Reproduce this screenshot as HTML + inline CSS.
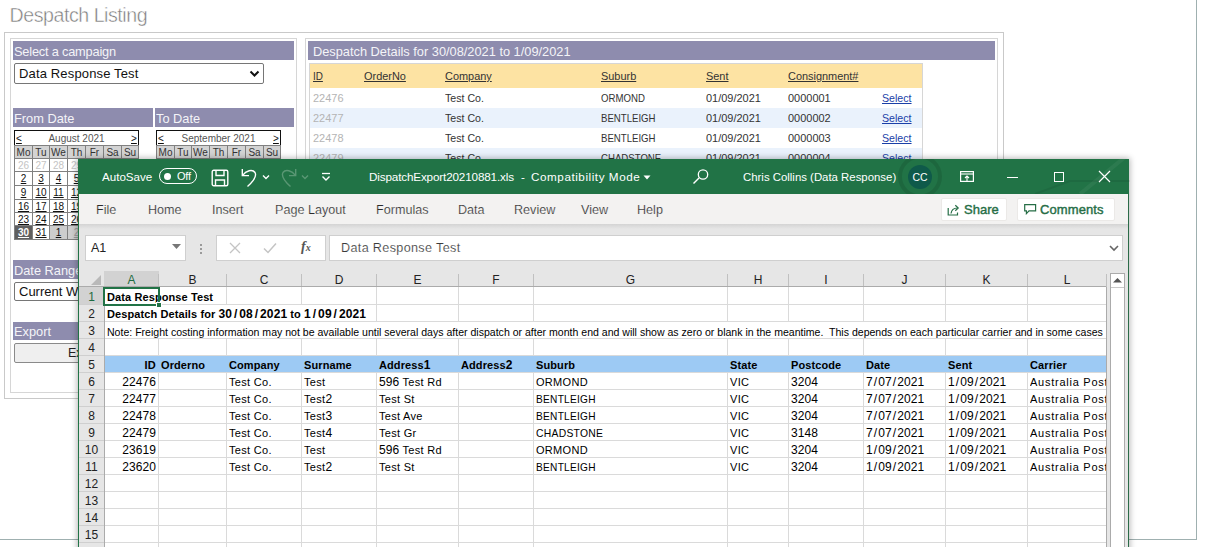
<!DOCTYPE html>
<html><head><meta charset="utf-8">
<style>
*{margin:0;padding:0;box-sizing:border-box}
html,body{width:1206px;height:547px;overflow:hidden;background:#fff;font-family:"Liberation Sans",sans-serif}
.a{position:absolute}
#root{position:relative;width:1206px;height:547px;overflow:hidden;background:#fff}
.ph{position:absolute;background:#8e8cae;color:#f4f4f8;font-size:12.8px;line-height:19px;padding-left:1px;padding-top:1px;white-space:nowrap;overflow:hidden}
.sel{position:absolute;border:1px solid #767676;border-radius:2px;background:#fff;font-size:13px;color:#111;padding-left:4px;white-space:nowrap;overflow:hidden}
.cal{position:absolute;border-collapse:collapse;font-size:10.5px}
.calbox{position:absolute;background:#fff}
.t{position:absolute;white-space:nowrap}
</style></head><body><div id="root">

<!-- page title -->
<div class="t" style="left:9.5px;top:3.5px;font-size:19.6px;color:#7c7c7c;letter-spacing:-0.45px;-webkit-text-stroke:0.45px #fff">Despatch Listing</div>
<!-- outer page frame lines -->
<div class="a" style="left:1196px;top:0;width:1px;height:540px;background:#9fb0b0"></div>
<div class="a" style="left:0;top:539px;width:1197px;height:1px;background:#9fb0b0"></div>

<!-- outer panel -->
<div class="a" style="left:4px;top:32px;width:1000px;height:367px;border:1px solid #c9c9c9"></div>
<!-- left box -->
<div class="a" style="left:10px;top:38px;width:287px;height:355px;border:1px solid #d6d6d6"></div>
<!-- right box -->
<div class="a" style="left:305px;top:38px;width:693px;height:355px;border:1px solid #d6d6d6"></div>

<div class="ph" style="left:13px;top:41px;width:281px;height:19px;letter-spacing:-0.2px">Select a campaign</div>
<div class="sel" style="left:14px;top:63px;width:250px;height:21px;line-height:19px;letter-spacing:0.15px">Data Response Test
  <svg class="a" style="left:234px;top:6px" width="11" height="8" viewBox="0 0 11 8"><path d="M1.5 1.5 L5.5 5.5 L9.5 1.5" fill="none" stroke="#111" stroke-width="2"/></svg>
</div>

<div class="ph" style="left:13px;top:108px;width:140px;height:19px">From Date</div>
<div class="ph" style="left:155px;top:108px;width:139px;height:19px">To Date</div>

<div class="a" style="left:14px;top:130px;width:125px;height:16px;border:1px solid #111;background:#fff"></div>
<div class="t" style="left:16px;top:133px;font-size:10px;line-height:12px;color:#111;text-decoration:underline">&lt;</div>
<div class="t" style="left:131px;top:133px;font-size:10px;line-height:12px;color:#111;text-decoration:underline">&gt;</div>
<div class="t" style="left:14px;width:125px;text-align:center;top:133px;font-size:10px;line-height:12px;color:#555">August 2021</div>
<div class="a" style="left:14px;top:145px;width:125px;height:95px;background:#808080"></div>
<div class="a" style="left:15px;top:146px;width:17px;height:12px;background:#d3d3d3;color:#333;font-size:10px;line-height:13px;text-align:center;font-weight:normal">Mo</div>
<div class="a" style="left:33px;top:146px;width:16px;height:12px;background:#d3d3d3;color:#333;font-size:10px;line-height:13px;text-align:center;font-weight:normal">Tu</div>
<div class="a" style="left:50px;top:146px;width:17px;height:12px;background:#d3d3d3;color:#333;font-size:10px;line-height:13px;text-align:center;font-weight:normal">We</div>
<div class="a" style="left:68px;top:146px;width:17px;height:12px;background:#d3d3d3;color:#333;font-size:10px;line-height:13px;text-align:center;font-weight:normal">Th</div>
<div class="a" style="left:86px;top:146px;width:17px;height:12px;background:#d3d3d3;color:#333;font-size:10px;line-height:13px;text-align:center;font-weight:normal">Fr</div>
<div class="a" style="left:104px;top:146px;width:17px;height:12px;background:#d3d3d3;color:#333;font-size:10px;line-height:13px;text-align:center;font-weight:normal">Sa</div>
<div class="a" style="left:122px;top:146px;width:16px;height:12px;background:#d3d3d3;color:#333;font-size:10px;line-height:13px;text-align:center;font-weight:normal">Su</div>
<div class="a" style="left:15px;top:159px;width:17px;height:12px;background:#fff;color:#c4c4c4;font-size:10px;line-height:13px;text-align:center;font-weight:normal">26</div>
<div class="a" style="left:33px;top:159px;width:16px;height:12px;background:#fff;color:#c4c4c4;font-size:10px;line-height:13px;text-align:center;font-weight:normal">27</div>
<div class="a" style="left:50px;top:159px;width:17px;height:12px;background:#fff;color:#c4c4c4;font-size:10px;line-height:13px;text-align:center;font-weight:normal">28</div>
<div class="a" style="left:68px;top:159px;width:17px;height:12px;background:#fff;color:#c4c4c4;font-size:10px;line-height:13px;text-align:center;font-weight:normal">29</div>
<div class="a" style="left:86px;top:159px;width:17px;height:12px;background:#fff;color:#c4c4c4;font-size:10px;line-height:13px;text-align:center;font-weight:normal">30</div>
<div class="a" style="left:104px;top:159px;width:17px;height:12px;background:#fff;color:#c4c4c4;font-size:10px;line-height:13px;text-align:center;font-weight:normal">31</div>
<div class="a" style="left:122px;top:159px;width:16px;height:12px;background:#fff;color:#111;font-size:10px;line-height:13px;text-align:center;font-weight:normal;text-decoration:underline">1</div>
<div class="a" style="left:15px;top:172px;width:17px;height:13px;background:#fff;color:#111;font-size:10px;line-height:14px;text-align:center;font-weight:normal;text-decoration:underline">2</div>
<div class="a" style="left:33px;top:172px;width:16px;height:13px;background:#fff;color:#111;font-size:10px;line-height:14px;text-align:center;font-weight:normal;text-decoration:underline">3</div>
<div class="a" style="left:50px;top:172px;width:17px;height:13px;background:#fff;color:#111;font-size:10px;line-height:14px;text-align:center;font-weight:normal;text-decoration:underline">4</div>
<div class="a" style="left:68px;top:172px;width:17px;height:13px;background:#fff;color:#111;font-size:10px;line-height:14px;text-align:center;font-weight:normal;text-decoration:underline">5</div>
<div class="a" style="left:86px;top:172px;width:17px;height:13px;background:#fff;color:#111;font-size:10px;line-height:14px;text-align:center;font-weight:normal;text-decoration:underline">6</div>
<div class="a" style="left:104px;top:172px;width:17px;height:13px;background:#fff;color:#111;font-size:10px;line-height:14px;text-align:center;font-weight:normal;text-decoration:underline">7</div>
<div class="a" style="left:122px;top:172px;width:16px;height:13px;background:#fff;color:#111;font-size:10px;line-height:14px;text-align:center;font-weight:normal;text-decoration:underline">8</div>
<div class="a" style="left:15px;top:186px;width:17px;height:13px;background:#fff;color:#111;font-size:10px;line-height:14px;text-align:center;font-weight:normal;text-decoration:underline">9</div>
<div class="a" style="left:33px;top:186px;width:16px;height:13px;background:#fff;color:#111;font-size:10px;line-height:14px;text-align:center;font-weight:normal;text-decoration:underline">10</div>
<div class="a" style="left:50px;top:186px;width:17px;height:13px;background:#fff;color:#111;font-size:10px;line-height:14px;text-align:center;font-weight:normal;text-decoration:underline">11</div>
<div class="a" style="left:68px;top:186px;width:17px;height:13px;background:#fff;color:#111;font-size:10px;line-height:14px;text-align:center;font-weight:normal;text-decoration:underline">12</div>
<div class="a" style="left:86px;top:186px;width:17px;height:13px;background:#fff;color:#111;font-size:10px;line-height:14px;text-align:center;font-weight:normal;text-decoration:underline">13</div>
<div class="a" style="left:104px;top:186px;width:17px;height:13px;background:#fff;color:#111;font-size:10px;line-height:14px;text-align:center;font-weight:normal;text-decoration:underline">14</div>
<div class="a" style="left:122px;top:186px;width:16px;height:13px;background:#fff;color:#111;font-size:10px;line-height:14px;text-align:center;font-weight:normal;text-decoration:underline">15</div>
<div class="a" style="left:15px;top:200px;width:17px;height:12px;background:#fff;color:#111;font-size:10px;line-height:13px;text-align:center;font-weight:normal;text-decoration:underline">16</div>
<div class="a" style="left:33px;top:200px;width:16px;height:12px;background:#fff;color:#111;font-size:10px;line-height:13px;text-align:center;font-weight:normal;text-decoration:underline">17</div>
<div class="a" style="left:50px;top:200px;width:17px;height:12px;background:#fff;color:#111;font-size:10px;line-height:13px;text-align:center;font-weight:normal;text-decoration:underline">18</div>
<div class="a" style="left:68px;top:200px;width:17px;height:12px;background:#fff;color:#111;font-size:10px;line-height:13px;text-align:center;font-weight:normal;text-decoration:underline">19</div>
<div class="a" style="left:86px;top:200px;width:17px;height:12px;background:#fff;color:#111;font-size:10px;line-height:13px;text-align:center;font-weight:normal;text-decoration:underline">20</div>
<div class="a" style="left:104px;top:200px;width:17px;height:12px;background:#fff;color:#111;font-size:10px;line-height:13px;text-align:center;font-weight:normal;text-decoration:underline">21</div>
<div class="a" style="left:122px;top:200px;width:16px;height:12px;background:#fff;color:#111;font-size:10px;line-height:13px;text-align:center;font-weight:normal;text-decoration:underline">22</div>
<div class="a" style="left:15px;top:213px;width:17px;height:12px;background:#fff;color:#111;font-size:10px;line-height:13px;text-align:center;font-weight:normal;text-decoration:underline">23</div>
<div class="a" style="left:33px;top:213px;width:16px;height:12px;background:#fff;color:#111;font-size:10px;line-height:13px;text-align:center;font-weight:normal;text-decoration:underline">24</div>
<div class="a" style="left:50px;top:213px;width:17px;height:12px;background:#fff;color:#111;font-size:10px;line-height:13px;text-align:center;font-weight:normal;text-decoration:underline">25</div>
<div class="a" style="left:68px;top:213px;width:17px;height:12px;background:#fff;color:#111;font-size:10px;line-height:13px;text-align:center;font-weight:normal;text-decoration:underline">26</div>
<div class="a" style="left:86px;top:213px;width:17px;height:12px;background:#fff;color:#111;font-size:10px;line-height:13px;text-align:center;font-weight:normal;text-decoration:underline">27</div>
<div class="a" style="left:104px;top:213px;width:17px;height:12px;background:#fff;color:#111;font-size:10px;line-height:13px;text-align:center;font-weight:normal;text-decoration:underline">28</div>
<div class="a" style="left:122px;top:213px;width:16px;height:12px;background:#fff;color:#111;font-size:10px;line-height:13px;text-align:center;font-weight:normal;text-decoration:underline">29</div>
<div class="a" style="left:15px;top:226px;width:17px;height:13px;background:#5f5f5f;color:#fff;font-size:10px;line-height:14px;text-align:center;font-weight:bold;text-decoration:underline">30</div>
<div class="a" style="left:33px;top:226px;width:16px;height:13px;background:#fff;color:#111;font-size:10px;line-height:14px;text-align:center;font-weight:normal;text-decoration:underline">31</div>
<div class="a" style="left:50px;top:226px;width:17px;height:13px;background:#cdcdcd;color:#111;font-size:10px;line-height:14px;text-align:center;font-weight:normal;text-decoration:underline">1</div>
<div class="a" style="left:68px;top:226px;width:17px;height:13px;background:#cdcdcd;color:#999;font-size:10px;line-height:14px;text-align:center;font-weight:normal;text-decoration:underline">2</div>
<div class="a" style="left:86px;top:226px;width:17px;height:13px;background:#cdcdcd;color:#999;font-size:10px;line-height:14px;text-align:center;font-weight:normal;text-decoration:underline">3</div>
<div class="a" style="left:104px;top:226px;width:17px;height:13px;background:#cdcdcd;color:#999;font-size:10px;line-height:14px;text-align:center;font-weight:normal;text-decoration:underline">4</div>
<div class="a" style="left:122px;top:226px;width:16px;height:13px;background:#cdcdcd;color:#999;font-size:10px;line-height:14px;text-align:center;font-weight:normal;text-decoration:underline">5</div>
<div class="a" style="left:156px;top:130px;width:125px;height:16px;border:1px solid #111;background:#fff"></div>
<div class="t" style="left:158px;top:133px;font-size:10px;line-height:12px;color:#111;text-decoration:underline">&lt;</div>
<div class="t" style="left:273px;top:133px;font-size:10px;line-height:12px;color:#111;text-decoration:underline">&gt;</div>
<div class="t" style="left:156px;width:125px;text-align:center;top:133px;font-size:10px;line-height:12px;color:#555">September 2021</div>
<div class="a" style="left:156px;top:145px;width:125px;height:95px;background:#808080"></div>
<div class="a" style="left:157px;top:146px;width:17px;height:12px;background:#d3d3d3;color:#333;font-size:10px;line-height:13px;text-align:center;font-weight:normal">Mo</div>
<div class="a" style="left:175px;top:146px;width:16px;height:12px;background:#d3d3d3;color:#333;font-size:10px;line-height:13px;text-align:center;font-weight:normal">Tu</div>
<div class="a" style="left:192px;top:146px;width:17px;height:12px;background:#d3d3d3;color:#333;font-size:10px;line-height:13px;text-align:center;font-weight:normal">We</div>
<div class="a" style="left:210px;top:146px;width:17px;height:12px;background:#d3d3d3;color:#333;font-size:10px;line-height:13px;text-align:center;font-weight:normal">Th</div>
<div class="a" style="left:228px;top:146px;width:17px;height:12px;background:#d3d3d3;color:#333;font-size:10px;line-height:13px;text-align:center;font-weight:normal">Fr</div>
<div class="a" style="left:246px;top:146px;width:17px;height:12px;background:#d3d3d3;color:#333;font-size:10px;line-height:13px;text-align:center;font-weight:normal">Sa</div>
<div class="a" style="left:264px;top:146px;width:16px;height:12px;background:#d3d3d3;color:#333;font-size:10px;line-height:13px;text-align:center;font-weight:normal">Su</div>
<div class="a" style="left:157px;top:159px;width:17px;height:12px;background:#fff;color:#c4c4c4;font-size:10px;line-height:13px;text-align:center;font-weight:normal">30</div>
<div class="a" style="left:175px;top:159px;width:16px;height:12px;background:#fff;color:#c4c4c4;font-size:10px;line-height:13px;text-align:center;font-weight:normal">31</div>
<div class="a" style="left:192px;top:159px;width:17px;height:12px;background:#fff;color:#111;font-size:10px;line-height:13px;text-align:center;font-weight:normal;text-decoration:underline">1</div>
<div class="a" style="left:210px;top:159px;width:17px;height:12px;background:#fff;color:#111;font-size:10px;line-height:13px;text-align:center;font-weight:normal;text-decoration:underline">2</div>
<div class="a" style="left:228px;top:159px;width:17px;height:12px;background:#fff;color:#111;font-size:10px;line-height:13px;text-align:center;font-weight:normal;text-decoration:underline">3</div>
<div class="a" style="left:246px;top:159px;width:17px;height:12px;background:#fff;color:#111;font-size:10px;line-height:13px;text-align:center;font-weight:normal;text-decoration:underline">4</div>
<div class="a" style="left:264px;top:159px;width:16px;height:12px;background:#fff;color:#111;font-size:10px;line-height:13px;text-align:center;font-weight:normal;text-decoration:underline">5</div>
<div class="a" style="left:157px;top:172px;width:17px;height:13px;background:#fff;color:#111;font-size:10px;line-height:14px;text-align:center;font-weight:normal;text-decoration:underline">6</div>
<div class="a" style="left:175px;top:172px;width:16px;height:13px;background:#fff;color:#111;font-size:10px;line-height:14px;text-align:center;font-weight:normal;text-decoration:underline">7</div>
<div class="a" style="left:192px;top:172px;width:17px;height:13px;background:#fff;color:#111;font-size:10px;line-height:14px;text-align:center;font-weight:normal;text-decoration:underline">8</div>
<div class="a" style="left:210px;top:172px;width:17px;height:13px;background:#fff;color:#111;font-size:10px;line-height:14px;text-align:center;font-weight:normal;text-decoration:underline">9</div>
<div class="a" style="left:228px;top:172px;width:17px;height:13px;background:#fff;color:#111;font-size:10px;line-height:14px;text-align:center;font-weight:normal;text-decoration:underline">10</div>
<div class="a" style="left:246px;top:172px;width:17px;height:13px;background:#fff;color:#111;font-size:10px;line-height:14px;text-align:center;font-weight:normal;text-decoration:underline">11</div>
<div class="a" style="left:264px;top:172px;width:16px;height:13px;background:#fff;color:#111;font-size:10px;line-height:14px;text-align:center;font-weight:normal;text-decoration:underline">12</div>
<div class="a" style="left:157px;top:186px;width:17px;height:13px;background:#fff;color:#111;font-size:10px;line-height:14px;text-align:center;font-weight:normal;text-decoration:underline">13</div>
<div class="a" style="left:175px;top:186px;width:16px;height:13px;background:#fff;color:#111;font-size:10px;line-height:14px;text-align:center;font-weight:normal;text-decoration:underline">14</div>
<div class="a" style="left:192px;top:186px;width:17px;height:13px;background:#fff;color:#111;font-size:10px;line-height:14px;text-align:center;font-weight:normal;text-decoration:underline">15</div>
<div class="a" style="left:210px;top:186px;width:17px;height:13px;background:#fff;color:#111;font-size:10px;line-height:14px;text-align:center;font-weight:normal;text-decoration:underline">16</div>
<div class="a" style="left:228px;top:186px;width:17px;height:13px;background:#fff;color:#111;font-size:10px;line-height:14px;text-align:center;font-weight:normal;text-decoration:underline">17</div>
<div class="a" style="left:246px;top:186px;width:17px;height:13px;background:#fff;color:#111;font-size:10px;line-height:14px;text-align:center;font-weight:normal;text-decoration:underline">18</div>
<div class="a" style="left:264px;top:186px;width:16px;height:13px;background:#fff;color:#111;font-size:10px;line-height:14px;text-align:center;font-weight:normal;text-decoration:underline">19</div>
<div class="a" style="left:157px;top:200px;width:17px;height:12px;background:#fff;color:#111;font-size:10px;line-height:13px;text-align:center;font-weight:normal;text-decoration:underline">20</div>
<div class="a" style="left:175px;top:200px;width:16px;height:12px;background:#fff;color:#111;font-size:10px;line-height:13px;text-align:center;font-weight:normal;text-decoration:underline">21</div>
<div class="a" style="left:192px;top:200px;width:17px;height:12px;background:#fff;color:#111;font-size:10px;line-height:13px;text-align:center;font-weight:normal;text-decoration:underline">22</div>
<div class="a" style="left:210px;top:200px;width:17px;height:12px;background:#fff;color:#111;font-size:10px;line-height:13px;text-align:center;font-weight:normal;text-decoration:underline">23</div>
<div class="a" style="left:228px;top:200px;width:17px;height:12px;background:#fff;color:#111;font-size:10px;line-height:13px;text-align:center;font-weight:normal;text-decoration:underline">24</div>
<div class="a" style="left:246px;top:200px;width:17px;height:12px;background:#fff;color:#111;font-size:10px;line-height:13px;text-align:center;font-weight:normal;text-decoration:underline">25</div>
<div class="a" style="left:264px;top:200px;width:16px;height:12px;background:#fff;color:#111;font-size:10px;line-height:13px;text-align:center;font-weight:normal;text-decoration:underline">26</div>
<div class="a" style="left:157px;top:213px;width:17px;height:12px;background:#fff;color:#111;font-size:10px;line-height:13px;text-align:center;font-weight:normal;text-decoration:underline">27</div>
<div class="a" style="left:175px;top:213px;width:16px;height:12px;background:#fff;color:#111;font-size:10px;line-height:13px;text-align:center;font-weight:normal;text-decoration:underline">28</div>
<div class="a" style="left:192px;top:213px;width:17px;height:12px;background:#fff;color:#111;font-size:10px;line-height:13px;text-align:center;font-weight:normal;text-decoration:underline">29</div>
<div class="a" style="left:210px;top:213px;width:17px;height:12px;background:#fff;color:#111;font-size:10px;line-height:13px;text-align:center;font-weight:normal;text-decoration:underline">30</div>
<div class="a" style="left:228px;top:213px;width:17px;height:12px;background:#fff;color:#c4c4c4;font-size:10px;line-height:13px;text-align:center;font-weight:normal">1</div>
<div class="a" style="left:246px;top:213px;width:17px;height:12px;background:#fff;color:#c4c4c4;font-size:10px;line-height:13px;text-align:center;font-weight:normal">2</div>
<div class="a" style="left:264px;top:213px;width:16px;height:12px;background:#fff;color:#c4c4c4;font-size:10px;line-height:13px;text-align:center;font-weight:normal">3</div>
<div class="a" style="left:157px;top:226px;width:17px;height:13px;background:#fff;color:#c4c4c4;font-size:10px;line-height:14px;text-align:center;font-weight:normal">4</div>
<div class="a" style="left:175px;top:226px;width:16px;height:13px;background:#fff;color:#c4c4c4;font-size:10px;line-height:14px;text-align:center;font-weight:normal">5</div>
<div class="a" style="left:192px;top:226px;width:17px;height:13px;background:#fff;color:#c4c4c4;font-size:10px;line-height:14px;text-align:center;font-weight:normal">6</div>
<div class="a" style="left:210px;top:226px;width:17px;height:13px;background:#fff;color:#c4c4c4;font-size:10px;line-height:14px;text-align:center;font-weight:normal">7</div>
<div class="a" style="left:228px;top:226px;width:17px;height:13px;background:#fff;color:#c4c4c4;font-size:10px;line-height:14px;text-align:center;font-weight:normal">8</div>
<div class="a" style="left:246px;top:226px;width:17px;height:13px;background:#fff;color:#c4c4c4;font-size:10px;line-height:14px;text-align:center;font-weight:normal">9</div>
<div class="a" style="left:264px;top:226px;width:16px;height:13px;background:#fff;color:#c4c4c4;font-size:10px;line-height:14px;text-align:center;font-weight:normal">10</div>

<div class="ph" style="left:13px;top:260px;width:281px;height:19px">Date Range</div>
<div class="sel" style="left:14px;top:282px;width:250px;height:19px;line-height:17px">Current Week</div>

<div class="ph" style="left:13px;top:322px;width:281px;height:18px;line-height:18px">Export</div>
<div class="a" style="left:14px;top:343px;width:144px;height:20px;border:1px solid #8a8a8a;border-radius:2px;background:#efefef;font-size:12.5px;line-height:18px;text-align:center;color:#222">Export</div>

<!-- right panel -->
<div class="ph" style="left:308px;top:41px;width:687px;height:19px;padding-left:5px">Despatch Details for 30/08/2021 to 1/09/2021</div>
<div class="a" style="left:309px;top:63px;width:614px;height:120px;border:1px solid #d6d6d6"></div>
<div class="a" style="left:310px;top:64px;width:612px;height:24px;background:#fde3a3"></div>
<div class="t" style="left:313px;top:70px;font-size:11.5px;line-height:13px;color:#333;text-decoration:underline;transform:scaleX(0.86);transform-origin:0 0">ID</div>
<div class="t" style="left:364px;top:70px;font-size:11.5px;line-height:13px;color:#333;text-decoration:underline;transform:scaleX(0.95);transform-origin:0 0">OrderNo</div>
<div class="t" style="left:445px;top:70px;font-size:11.5px;line-height:13px;color:#333;text-decoration:underline;transform:scaleX(0.95);transform-origin:0 0">Company</div>
<div class="t" style="left:601px;top:70px;font-size:11.5px;line-height:13px;color:#333;text-decoration:underline;transform:scaleX(0.95);transform-origin:0 0">Suburb</div>
<div class="t" style="left:706px;top:70px;font-size:11.5px;line-height:13px;color:#333;text-decoration:underline;transform:scaleX(0.95);transform-origin:0 0">Sent</div>
<div class="t" style="left:788px;top:70px;font-size:11.5px;line-height:13px;color:#333;text-decoration:underline;transform:scaleX(0.95);transform-origin:0 0">Consignment#</div>
<div class="a" style="left:310px;top:88px;width:612px;height:20px;background:#fff"></div>
<div class="t" style="left:313px;top:92px;font-size:11.2px;line-height:13px;transform:scaleX(0.98);transform-origin:0 0;color:#b4b4b4">22476</div>
<div class="t" style="left:445px;top:92px;font-size:11.2px;line-height:13px;transform:scaleX(0.95);transform-origin:0 0;color:#333">Test Co.</div>
<div class="t" style="left:601px;top:92px;font-size:11.2px;line-height:13px;transform:scaleX(0.86);transform-origin:0 0;color:#333">ORMOND</div>
<div class="t" style="left:706px;top:92px;font-size:11.2px;line-height:13px;transform:scaleX(0.98);transform-origin:0 0;color:#333">01/09/2021</div>
<div class="t" style="left:788px;top:92px;font-size:11.2px;line-height:13px;transform:scaleX(0.98);transform-origin:0 0;color:#333">0000001</div>
<div class="t" style="left:882px;top:92px;font-size:11.2px;line-height:13px;transform:scaleX(0.95);transform-origin:0 0;color:#1a3fa8;text-decoration:underline">Select</div>
<div class="a" style="left:310px;top:108px;width:612px;height:20px;background:#eaf2fc"></div>
<div class="t" style="left:313px;top:112px;font-size:11.2px;line-height:13px;transform:scaleX(0.98);transform-origin:0 0;color:#b4b4b4">22477</div>
<div class="t" style="left:445px;top:112px;font-size:11.2px;line-height:13px;transform:scaleX(0.95);transform-origin:0 0;color:#333">Test Co.</div>
<div class="t" style="left:601px;top:112px;font-size:11.2px;line-height:13px;transform:scaleX(0.86);transform-origin:0 0;color:#333">BENTLEIGH</div>
<div class="t" style="left:706px;top:112px;font-size:11.2px;line-height:13px;transform:scaleX(0.98);transform-origin:0 0;color:#333">01/09/2021</div>
<div class="t" style="left:788px;top:112px;font-size:11.2px;line-height:13px;transform:scaleX(0.98);transform-origin:0 0;color:#333">0000002</div>
<div class="t" style="left:882px;top:112px;font-size:11.2px;line-height:13px;transform:scaleX(0.95);transform-origin:0 0;color:#1a3fa8;text-decoration:underline">Select</div>
<div class="a" style="left:310px;top:128px;width:612px;height:20px;background:#fff"></div>
<div class="t" style="left:313px;top:132px;font-size:11.2px;line-height:13px;transform:scaleX(0.98);transform-origin:0 0;color:#b4b4b4">22478</div>
<div class="t" style="left:445px;top:132px;font-size:11.2px;line-height:13px;transform:scaleX(0.95);transform-origin:0 0;color:#333">Test Co.</div>
<div class="t" style="left:601px;top:132px;font-size:11.2px;line-height:13px;transform:scaleX(0.86);transform-origin:0 0;color:#333">BENTLEIGH</div>
<div class="t" style="left:706px;top:132px;font-size:11.2px;line-height:13px;transform:scaleX(0.98);transform-origin:0 0;color:#333">01/09/2021</div>
<div class="t" style="left:788px;top:132px;font-size:11.2px;line-height:13px;transform:scaleX(0.98);transform-origin:0 0;color:#333">0000003</div>
<div class="t" style="left:882px;top:132px;font-size:11.2px;line-height:13px;transform:scaleX(0.95);transform-origin:0 0;color:#1a3fa8;text-decoration:underline">Select</div>
<div class="a" style="left:310px;top:148px;width:612px;height:20px;background:#eaf2fc"></div>
<div class="t" style="left:313px;top:152px;font-size:11.2px;line-height:13px;transform:scaleX(0.98);transform-origin:0 0;color:#b4b4b4">22479</div>
<div class="t" style="left:445px;top:152px;font-size:11.2px;line-height:13px;transform:scaleX(0.95);transform-origin:0 0;color:#333">Test Co.</div>
<div class="t" style="left:601px;top:152px;font-size:11.2px;line-height:13px;transform:scaleX(0.86);transform-origin:0 0;color:#333">CHADSTONE</div>
<div class="t" style="left:706px;top:152px;font-size:11.2px;line-height:13px;transform:scaleX(0.98);transform-origin:0 0;color:#333">01/09/2021</div>
<div class="t" style="left:788px;top:152px;font-size:11.2px;line-height:13px;transform:scaleX(0.98);transform-origin:0 0;color:#333">0000004</div>
<div class="t" style="left:882px;top:152px;font-size:11.2px;line-height:13px;transform:scaleX(0.95);transform-origin:0 0;color:#1a3fa8;text-decoration:underline">Select</div>

<!-- EXCEL WINDOW -->
<div class="a" style="left:78px;top:159px;width:1051px;height:398px;background:#e6e6e6;box-shadow:0 0 6px 1px rgba(0,0,0,0.28)"></div>
<div class="a" style="left:78px;top:159px;width:1051px;height:35px;background:#217346"></div>
<div class="a" style="left:79px;top:194px;width:1049px;height:30px;background:#f3f2f1"></div>
<div class="a" style="left:79px;top:224px;width:1049px;height:5px;background:linear-gradient(#d4d4d4,#e6e6e6)"></div>
<div class="a" style="left:78px;top:194px;width:1px;height:400px;background:#217346"></div>
<div class="a" style="left:1128px;top:194px;width:1px;height:400px;background:#2b6b48"></div>
<div class="t" style="left:102px;top:170px;font-size:11.6px;color:#ffffff">AutoSave</div>
<div class="a" style="left:159px;top:168px;width:38px;height:16px;border:1.6px solid #fff;border-radius:8px"></div>
<div class="a" style="left:163.5px;top:172.5px;width:7px;height:7px;background:#fff;border-radius:50%"></div>
<div class="t" style="left:177px;top:170px;font-size:11px;line-height:12px;color:#ffffff;letter-spacing:-0.2px">Off</div>
<svg class="a" style="left:211px;top:169px" width="18" height="18" viewBox="0 0 18 18"><rect x="1.2" y="1.2" width="15.6" height="15.6" rx="1.5" fill="none" stroke="#fff" stroke-width="1.4"/><path d="M5 1.5 V6.5 H13 V1.5" fill="none" stroke="#fff" stroke-width="1.4"/><path d="M4.5 16.5 V11 H13.5 V16.5" fill="none" stroke="#fff" stroke-width="1.4"/></svg>
<svg class="a" style="left:240px;top:168px" width="18" height="20" viewBox="0 0 18 20"><path d="M2.3 1 V7.6 H9" fill="none" stroke="#fff" stroke-width="1.4"/><path d="M2.6 7.3 C6 2.5 12.5 0.8 15 4.5 C17 8 13 13.5 7.5 18.5" fill="none" stroke="#fff" stroke-width="1.4"/></svg>
<svg class="a" style="left:262px;top:174px" width="8" height="6" viewBox="0 0 8 6"><path d="M1 1.5 L4 4.5 L7 1.5" fill="none" stroke="#fff" stroke-width="1.4"/></svg>
<svg class="a" style="left:280px;top:168px" width="18" height="20" viewBox="0 0 18 20"><path d="M15.7 1 V7.6 H9" fill="none" stroke="#5a9774" stroke-width="1.4"/><path d="M15.4 7.3 C12 2.5 5.5 0.8 3 4.5 C1 8 5 13.5 10.5 18.5" fill="none" stroke="#5a9774" stroke-width="1.4"/></svg>
<svg class="a" style="left:301px;top:174px" width="8" height="6" viewBox="0 0 8 6"><path d="M1 1.5 L4 4.5 L7 1.5" fill="none" stroke="#5a9774" stroke-width="1.4"/></svg>
<svg class="a" style="left:321px;top:172px" width="10" height="10" viewBox="0 0 10 10"><path d="M1 1.5 H9" stroke="#fff" stroke-width="1.3"/><path d="M1.5 4.5 L5 8 L8.5 4.5" fill="none" stroke="#fff" stroke-width="1.4"/></svg>
<div class="t" style="left:369px;top:170px;font-size:11.7px;color:#ffffff;letter-spacing:-0.15px">DispatchExport20210881.xls</div>
<div class="t" style="left:521px;top:170px;font-size:11.7px;color:#ffffff">-</div>
<div class="t" style="left:531px;top:170px;font-size:11.7px;color:#ffffff;letter-spacing:0.55px">Compatibility Mode</div>
<svg class="a" style="left:643px;top:175px" width="8" height="5" viewBox="0 0 8 5"><path d="M0.5 0.5 H7.5 L4 4.5 Z" fill="#fff"/></svg>
<svg class="a" style="left:692px;top:168px" width="17" height="17" viewBox="0 0 17 17"><circle cx="11" cy="6.5" r="4.7" fill="none" stroke="#fff" stroke-width="1.3"/><path d="M7 10 L1.5 15.5" stroke="#fff" stroke-width="1.5"/></svg>
<div class="t" style="left:743px;top:171px;font-size:11.4px;color:#ffffff">Chris Collins (Data Response)</div>
<svg class="a" style="left:780px;top:159px" width="350" height="35" viewBox="0 0 350 35"><circle cx="140" cy="17.5" r="20" fill="none" stroke="rgba(0,0,0,0.10)" stroke-width="4"/><path d="M255 35 L290 22 H350" fill="none" stroke="rgba(0,0,0,0.07)" stroke-width="2"/><path d="M300 35 L345 -2" fill="none" stroke="rgba(255,255,255,0.05)" stroke-width="4"/></svg>
<div class="a" style="left:908px;top:165px;width:24px;height:24px;border-radius:50%;background:#0f5a4a;color:#fff;font-size:10.5px;line-height:24px;text-align:center">CC</div>
<svg class="a" style="left:960px;top:171px" width="14" height="11" viewBox="0 0 14 11"><rect x="0.6" y="0.6" width="12.8" height="9.8" fill="none" stroke="#fff" stroke-width="1.2"/><path d="M1 3 H13" stroke="#fff" stroke-width="1.1"/><path d="M7 10 V5 M5 7 L7 5 L9 7" fill="none" stroke="#fff" stroke-width="1.1"/></svg>
<div class="a" style="left:1007px;top:177px;width:11px;height:1px;background:#fff"></div>
<div class="a" style="left:1054px;top:172px;width:10px;height:10px;border:1px solid #fff"></div>
<svg class="a" style="left:1098px;top:170px" width="13" height="13" viewBox="0 0 13 13"><path d="M1 1 L12 12 M12 1 L1 12" stroke="#fff" stroke-width="1.2"/></svg>
<div class="t" style="left:96px;top:202.5px;font-size:12.6px;color:#2a2a2a;-webkit-text-stroke:0.2px #f3f2f1">File</div>
<div class="t" style="left:148px;top:202.5px;font-size:12.6px;color:#2a2a2a;-webkit-text-stroke:0.2px #f3f2f1">Home</div>
<div class="t" style="left:212px;top:202.5px;font-size:12.6px;color:#2a2a2a;-webkit-text-stroke:0.2px #f3f2f1">Insert</div>
<div class="t" style="left:275px;top:202.5px;font-size:12.6px;color:#2a2a2a;-webkit-text-stroke:0.2px #f3f2f1">Page Layout</div>
<div class="t" style="left:376px;top:202.5px;font-size:12.6px;color:#2a2a2a;-webkit-text-stroke:0.2px #f3f2f1">Formulas</div>
<div class="t" style="left:458px;top:202.5px;font-size:12.6px;color:#2a2a2a;-webkit-text-stroke:0.2px #f3f2f1">Data</div>
<div class="t" style="left:514px;top:202.5px;font-size:12.6px;color:#2a2a2a;-webkit-text-stroke:0.2px #f3f2f1">Review</div>
<div class="t" style="left:581px;top:202.5px;font-size:12.6px;color:#2a2a2a;-webkit-text-stroke:0.2px #f3f2f1">View</div>
<div class="t" style="left:637px;top:202.5px;font-size:12.6px;color:#2a2a2a;-webkit-text-stroke:0.2px #f3f2f1">Help</div>
<div class="a" style="left:941px;top:198px;width:66px;height:23px;background:#fff;border:1px solid #ebe9e7;border-radius:2px"></div>
<div class="t" style="left:964px;top:202px;font-size:13px;line-height:15px;color:#266e46;-webkit-text-stroke:0.4px #266e46">Share</div>
<svg class="a" style="left:947px;top:203px" width="13" height="13" viewBox="0 0 13 13"><path d="M1.2 5 V12 H10.5 V9.5" fill="none" stroke="#266e46" stroke-width="1.2"/><path d="M4 10.5 C4.5 7 6.5 5 10.5 5" fill="none" stroke="#266e46" stroke-width="1.2"/><path d="M8.3 2.2 L11.2 5 L8.3 7.8" fill="none" stroke="#266e46" stroke-width="1.2"/></svg>
<div class="a" style="left:1017px;top:198px;width:98px;height:23px;background:#fff;border:1px solid #ebe9e7;border-radius:2px"></div>
<div class="t" style="left:1040px;top:202px;font-size:13px;line-height:15px;color:#266e46;-webkit-text-stroke:0.4px #266e46;letter-spacing:0.1px">Comments</div>
<svg class="a" style="left:1024px;top:204px" width="13" height="11" viewBox="0 0 13 11"><path d="M0.7 0.7 H11.6 V6.8 H5 L2.4 9.6 V6.8 H0.7 Z" fill="none" stroke="#266e46" stroke-width="1.2"/></svg>
<div class="a" style="left:85px;top:235px;width:101px;height:26px;background:#fff;border:1px solid #cfcfcf"></div>
<div class="t" style="left:91px;top:241px;font-size:12.5px;color:#222">A1</div>
<svg class="a" style="left:172px;top:244px" width="9" height="6" viewBox="0 0 9 6"><path d="M0 0 H9 L4.5 5 Z" fill="#777"/></svg>
<div class="a" style="left:200px;top:244px;width:2px;height:2px;background:#9a9a9a"></div>
<div class="a" style="left:200px;top:248px;width:2px;height:2px;background:#9a9a9a"></div>
<div class="a" style="left:200px;top:252px;width:2px;height:2px;background:#9a9a9a"></div>
<div class="a" style="left:216px;top:235px;width:110px;height:26px;background:#fff;border:1px solid #cfcfcf"></div>
<svg class="a" style="left:229px;top:242px" width="12" height="12" viewBox="0 0 12 12"><path d="M1 1 L11 11 M11 1 L1 11" stroke="#c4c4c4" stroke-width="1.3"/></svg>
<svg class="a" style="left:263px;top:242px" width="14" height="12" viewBox="0 0 14 12"><path d="M1 6.5 L5 10.5 L13 1.5" fill="none" stroke="#c4c4c4" stroke-width="1.5"/></svg>
<div class="t" style="left:301px;top:239px;font-size:14px;line-height:16px;color:#555;font-family:'Liberation Serif',serif;font-style:italic;font-weight:bold">f<span style="font-size:10px">x</span></div>
<div class="a" style="left:329px;top:235px;width:794px;height:26px;background:#fff;border:1px solid #cfcfcf"></div>
<div class="t" style="left:341px;top:241px;font-size:12.6px;color:#3a3a3a;letter-spacing:0.35px;-webkit-text-stroke:0.15px #fff">Data Response Test</div>
<svg class="a" style="left:1109px;top:245px" width="10" height="7" viewBox="0 0 10 7"><path d="M1 1 L5 5 L9 1" fill="none" stroke="#666" stroke-width="1.6"/></svg>
<div class="a" style="left:79px;top:271px;width:1027px;height:16px;background:#e6e6e6"></div>
<div class="a" style="left:104px;top:271px;width:55px;height:16px;background:#d2d2d2"></div>
<svg class="a" style="left:91px;top:275px" width="10" height="10" viewBox="0 0 10 10"><path d="M10 0 V10 H0 Z" fill="#b9b9b9"/></svg>
<div class="t" style="left:105px;width:53px;text-align:center;top:273px;font-size:12px;line-height:14px;color:#1e6b41">A</div>
<div class="a" style="left:158px;top:274px;width:1px;height:13px;background:#c0c0c0"></div>
<div class="t" style="left:159px;width:67px;text-align:center;top:273px;font-size:12px;line-height:14px;color:#222">B</div>
<div class="a" style="left:226px;top:274px;width:1px;height:13px;background:#c0c0c0"></div>
<div class="t" style="left:227px;width:74px;text-align:center;top:273px;font-size:12px;line-height:14px;color:#222">C</div>
<div class="a" style="left:301px;top:274px;width:1px;height:13px;background:#c0c0c0"></div>
<div class="t" style="left:302px;width:74px;text-align:center;top:273px;font-size:12px;line-height:14px;color:#222">D</div>
<div class="a" style="left:376px;top:274px;width:1px;height:13px;background:#c0c0c0"></div>
<div class="t" style="left:377px;width:81px;text-align:center;top:273px;font-size:12px;line-height:14px;color:#222">E</div>
<div class="a" style="left:458px;top:274px;width:1px;height:13px;background:#c0c0c0"></div>
<div class="t" style="left:459px;width:74px;text-align:center;top:273px;font-size:12px;line-height:14px;color:#222">F</div>
<div class="a" style="left:533px;top:274px;width:1px;height:13px;background:#c0c0c0"></div>
<div class="t" style="left:534px;width:193px;text-align:center;top:273px;font-size:12px;line-height:14px;color:#222">G</div>
<div class="a" style="left:727px;top:274px;width:1px;height:13px;background:#c0c0c0"></div>
<div class="t" style="left:728px;width:60px;text-align:center;top:273px;font-size:12px;line-height:14px;color:#222">H</div>
<div class="a" style="left:788px;top:274px;width:1px;height:13px;background:#c0c0c0"></div>
<div class="t" style="left:789px;width:74px;text-align:center;top:273px;font-size:12px;line-height:14px;color:#222">I</div>
<div class="a" style="left:863px;top:274px;width:1px;height:13px;background:#c0c0c0"></div>
<div class="t" style="left:864px;width:81px;text-align:center;top:273px;font-size:12px;line-height:14px;color:#222">J</div>
<div class="a" style="left:945px;top:274px;width:1px;height:13px;background:#c0c0c0"></div>
<div class="t" style="left:946px;width:81px;text-align:center;top:273px;font-size:12px;line-height:14px;color:#222">K</div>
<div class="a" style="left:1027px;top:274px;width:1px;height:13px;background:#c0c0c0"></div>
<div class="t" style="left:1028px;width:78px;text-align:center;top:273px;font-size:12px;line-height:14px;color:#222">L</div>
<div class="a" style="left:1106px;top:274px;width:1px;height:13px;background:#c0c0c0"></div>
<div class="a" style="left:79px;top:286px;width:1027px;height:1px;background:#ababab"></div>
<div class="a" style="left:105px;top:287px;width:1001px;height:260px;background:#fff"></div>
<div class="a" style="left:79px;top:287px;width:25px;height:260px;background:#e6e6e6"></div>
<div class="a" style="left:79px;top:287px;width:25px;height:17px;background:#d2d2d2"></div>
<div class="a" style="left:104px;top:287px;width:1px;height:260px;background:#ababab"></div>
<div class="a" style="left:1106px;top:287px;width:1px;height:260px;background:#ababab"></div>
<div class="a" style="left:105px;top:304px;width:1001px;height:1px;background:#dadada"></div>
<div class="a" style="left:79px;top:304px;width:25px;height:1px;background:#cfcfcf"></div>
<div class="t" style="left:79px;width:25px;text-align:center;top:290px;font-size:12px;line-height:14px;color:#1e6b41">1</div>
<div class="a" style="left:105px;top:321px;width:1001px;height:1px;background:#dadada"></div>
<div class="a" style="left:79px;top:321px;width:25px;height:1px;background:#cfcfcf"></div>
<div class="t" style="left:79px;width:25px;text-align:center;top:307px;font-size:12px;line-height:14px;color:#222">2</div>
<div class="a" style="left:105px;top:338px;width:1001px;height:1px;background:#dadada"></div>
<div class="a" style="left:79px;top:338px;width:25px;height:1px;background:#cfcfcf"></div>
<div class="t" style="left:79px;width:25px;text-align:center;top:324px;font-size:12px;line-height:14px;color:#222">3</div>
<div class="a" style="left:105px;top:355px;width:1001px;height:1px;background:#dadada"></div>
<div class="a" style="left:79px;top:355px;width:25px;height:1px;background:#cfcfcf"></div>
<div class="t" style="left:79px;width:25px;text-align:center;top:341px;font-size:12px;line-height:14px;color:#222">4</div>
<div class="a" style="left:105px;top:372px;width:1001px;height:1px;background:#dadada"></div>
<div class="a" style="left:79px;top:372px;width:25px;height:1px;background:#cfcfcf"></div>
<div class="t" style="left:79px;width:25px;text-align:center;top:358px;font-size:12px;line-height:14px;color:#222">5</div>
<div class="a" style="left:105px;top:389px;width:1001px;height:1px;background:#dadada"></div>
<div class="a" style="left:79px;top:389px;width:25px;height:1px;background:#cfcfcf"></div>
<div class="t" style="left:79px;width:25px;text-align:center;top:375px;font-size:12px;line-height:14px;color:#222">6</div>
<div class="a" style="left:105px;top:406px;width:1001px;height:1px;background:#dadada"></div>
<div class="a" style="left:79px;top:406px;width:25px;height:1px;background:#cfcfcf"></div>
<div class="t" style="left:79px;width:25px;text-align:center;top:392px;font-size:12px;line-height:14px;color:#222">7</div>
<div class="a" style="left:105px;top:423px;width:1001px;height:1px;background:#dadada"></div>
<div class="a" style="left:79px;top:423px;width:25px;height:1px;background:#cfcfcf"></div>
<div class="t" style="left:79px;width:25px;text-align:center;top:409px;font-size:12px;line-height:14px;color:#222">8</div>
<div class="a" style="left:105px;top:440px;width:1001px;height:1px;background:#dadada"></div>
<div class="a" style="left:79px;top:440px;width:25px;height:1px;background:#cfcfcf"></div>
<div class="t" style="left:79px;width:25px;text-align:center;top:426px;font-size:12px;line-height:14px;color:#222">9</div>
<div class="a" style="left:105px;top:457px;width:1001px;height:1px;background:#dadada"></div>
<div class="a" style="left:79px;top:457px;width:25px;height:1px;background:#cfcfcf"></div>
<div class="t" style="left:79px;width:25px;text-align:center;top:443px;font-size:12px;line-height:14px;color:#222">10</div>
<div class="a" style="left:105px;top:474px;width:1001px;height:1px;background:#dadada"></div>
<div class="a" style="left:79px;top:474px;width:25px;height:1px;background:#cfcfcf"></div>
<div class="t" style="left:79px;width:25px;text-align:center;top:460px;font-size:12px;line-height:14px;color:#222">11</div>
<div class="a" style="left:105px;top:491px;width:1001px;height:1px;background:#dadada"></div>
<div class="a" style="left:79px;top:491px;width:25px;height:1px;background:#cfcfcf"></div>
<div class="t" style="left:79px;width:25px;text-align:center;top:477px;font-size:12px;line-height:14px;color:#222">12</div>
<div class="a" style="left:105px;top:508px;width:1001px;height:1px;background:#dadada"></div>
<div class="a" style="left:79px;top:508px;width:25px;height:1px;background:#cfcfcf"></div>
<div class="t" style="left:79px;width:25px;text-align:center;top:494px;font-size:12px;line-height:14px;color:#222">13</div>
<div class="a" style="left:105px;top:525px;width:1001px;height:1px;background:#dadada"></div>
<div class="a" style="left:79px;top:525px;width:25px;height:1px;background:#cfcfcf"></div>
<div class="t" style="left:79px;width:25px;text-align:center;top:511px;font-size:12px;line-height:14px;color:#222">14</div>
<div class="a" style="left:105px;top:542px;width:1001px;height:1px;background:#dadada"></div>
<div class="a" style="left:79px;top:542px;width:25px;height:1px;background:#cfcfcf"></div>
<div class="t" style="left:79px;width:25px;text-align:center;top:528px;font-size:12px;line-height:14px;color:#222">15</div>
<div class="a" style="left:105px;top:559px;width:1001px;height:1px;background:#dadada"></div>
<div class="a" style="left:79px;top:559px;width:25px;height:1px;background:#cfcfcf"></div>
<div class="a" style="left:158px;top:287px;width:1px;height:260px;background:#dadada"></div>
<div class="a" style="left:226px;top:287px;width:1px;height:260px;background:#dadada"></div>
<div class="a" style="left:301px;top:287px;width:1px;height:260px;background:#dadada"></div>
<div class="a" style="left:376px;top:287px;width:1px;height:260px;background:#dadada"></div>
<div class="a" style="left:458px;top:287px;width:1px;height:260px;background:#dadada"></div>
<div class="a" style="left:533px;top:287px;width:1px;height:260px;background:#dadada"></div>
<div class="a" style="left:727px;top:287px;width:1px;height:260px;background:#dadada"></div>
<div class="a" style="left:788px;top:287px;width:1px;height:260px;background:#dadada"></div>
<div class="a" style="left:863px;top:287px;width:1px;height:260px;background:#dadada"></div>
<div class="a" style="left:945px;top:287px;width:1px;height:260px;background:#dadada"></div>
<div class="a" style="left:1027px;top:287px;width:1px;height:260px;background:#dadada"></div>
<div class="a" style="left:105px;top:356px;width:1001px;height:16px;background:#9dcaf4"></div>
<div class="a" style="left:105px;top:288px;width:121px;height:16px;background:#fff"></div>
<div class="a" style="left:105px;top:305px;width:271px;height:16px;background:#fff"></div>
<div class="a" style="left:105px;top:322px;width:1001px;height:16px;background:#fff"></div>
<div class="t" style="left:107px;top:291px;font-size:11px;line-height:12px;font-weight:bold;color:#000;letter-spacing:0.1px">Data Response Test</div>
<div class="t" style="left:107px;top:308px;font-size:11px;line-height:12px;font-weight:bold;color:#000;letter-spacing:0.1px">Despatch Details for <span style="font-size:12px;letter-spacing:0.1px">30</span><span style="font-size:12px;margin:0 1.9px">/</span><span style="font-size:12px;letter-spacing:0.1px">08</span><span style="font-size:12px;margin:0 1.9px">/</span><span style="font-size:12px;letter-spacing:0.1px">2021</span> to <span style="font-size:12px;letter-spacing:0.1px">1</span><span style="font-size:12px;margin:0 1.9px">/</span><span style="font-size:12px;letter-spacing:0.1px">09</span><span style="font-size:12px;margin:0 1.9px">/</span><span style="font-size:12px;letter-spacing:0.1px">2021</span></div>
<div class="t" style="left:107px;top:326px;font-size:10.55px;line-height:12px;color:#000;width:999px;overflow:hidden">Note: Freight costing information may not be available until several days after dispatch or after month end and will show as zero or blank in the meantime.&nbsp; This depends on each particular carrier and in some cases</div>
<div class="t" style="left:105px;width:51px;text-align:right;top:359px;font-size:11px;line-height:12px;font-weight:bold;color:#000;letter-spacing:0.3px">ID</div>
<div class="t" style="left:161px;top:359px;font-size:11px;line-height:12px;font-weight:bold;color:#000;letter-spacing:0.1px">Orderno</div>
<div class="t" style="left:229px;top:359px;font-size:11px;line-height:12px;font-weight:bold;color:#000;letter-spacing:0.1px">Company</div>
<div class="t" style="left:304px;top:359px;font-size:11px;line-height:12px;font-weight:bold;color:#000;letter-spacing:0.1px">Surname</div>
<div class="t" style="left:379px;top:359px;font-size:11px;line-height:12px;font-weight:bold;color:#000;letter-spacing:0.1px">Address<span style="font-size:12px;letter-spacing:0.1px">1</span></div>
<div class="t" style="left:461px;top:359px;font-size:11px;line-height:12px;font-weight:bold;color:#000;letter-spacing:0.1px">Address<span style="font-size:12px;letter-spacing:0.1px">2</span></div>
<div class="t" style="left:536px;top:359px;font-size:11px;line-height:12px;font-weight:bold;color:#000;letter-spacing:0.1px">Suburb</div>
<div class="t" style="left:730px;top:359px;font-size:11px;line-height:12px;font-weight:bold;color:#000;letter-spacing:0.1px">State</div>
<div class="t" style="left:791px;top:359px;font-size:11px;line-height:12px;font-weight:bold;color:#000;letter-spacing:0.1px">Postcode</div>
<div class="t" style="left:866px;top:359px;font-size:11px;line-height:12px;font-weight:bold;color:#000;letter-spacing:0.1px">Date</div>
<div class="t" style="left:948px;top:359px;font-size:11px;line-height:12px;font-weight:bold;color:#000;letter-spacing:0.1px">Sent</div>
<div class="t" style="left:1030px;top:359px;font-size:11px;line-height:12px;font-weight:bold;color:#000;letter-spacing:0.1px">Carrier</div>
<div class="t" style="left:105px;width:51px;text-align:right;top:376px;font-size:11px;line-height:12px;font-weight:normal;color:#000;letter-spacing:0.3px"><span style="font-size:12px;letter-spacing:0.1px">22476</span></div>
<div class="t" style="left:229px;top:376px;font-size:11px;line-height:12px;font-weight:normal;color:#000;letter-spacing:0.3px">Test Co.</div>
<div class="t" style="left:304px;top:376px;font-size:11px;line-height:12px;font-weight:normal;color:#000;letter-spacing:0.3px">Test</div>
<div class="t" style="left:379px;top:376px;font-size:11px;line-height:12px;font-weight:normal;color:#000;letter-spacing:0.3px"><span style="font-size:12px;letter-spacing:0.1px">596</span> Test Rd</div>
<div class="t" style="left:536px;top:376px;font-size:11px;line-height:12px;font-weight:normal;color:#000;letter-spacing:0.3px">ORMOND</div>
<div class="t" style="left:730px;top:376px;font-size:11px;line-height:12px;font-weight:normal;color:#000;letter-spacing:0.3px">VIC</div>
<div class="t" style="left:791px;top:376px;font-size:11px;line-height:12px;font-weight:normal;color:#000;letter-spacing:0.3px"><span style="font-size:12px;letter-spacing:0.1px">3204</span></div>
<div class="t" style="left:866px;top:376px;font-size:11px;line-height:12px;font-weight:normal;color:#000;letter-spacing:0.3px"><span style="font-size:12px;letter-spacing:0.1px">7</span><span style="font-size:12px;margin:0 0.9px">/</span><span style="font-size:12px;letter-spacing:0.1px">07</span><span style="font-size:12px;margin:0 0.9px">/</span><span style="font-size:12px;letter-spacing:0.1px">2021</span></div>
<div class="t" style="left:948px;top:376px;font-size:11px;line-height:12px;font-weight:normal;color:#000;letter-spacing:0.3px"><span style="font-size:12px;letter-spacing:0.1px">1</span><span style="font-size:12px;margin:0 0.9px">/</span><span style="font-size:12px;letter-spacing:0.1px">09</span><span style="font-size:12px;margin:0 0.9px">/</span><span style="font-size:12px;letter-spacing:0.1px">2021</span></div>
<div class="t" style="left:1030px;width:76px;overflow:hidden;top:376px;font-size:11px;line-height:12px;font-weight:normal;color:#000;letter-spacing:0.75px">Australia Post</div>
<div class="t" style="left:105px;width:51px;text-align:right;top:393px;font-size:11px;line-height:12px;font-weight:normal;color:#000;letter-spacing:0.3px"><span style="font-size:12px;letter-spacing:0.1px">22477</span></div>
<div class="t" style="left:229px;top:393px;font-size:11px;line-height:12px;font-weight:normal;color:#000;letter-spacing:0.3px">Test Co.</div>
<div class="t" style="left:304px;top:393px;font-size:11px;line-height:12px;font-weight:normal;color:#000;letter-spacing:0.3px">Test<span style="font-size:12px;letter-spacing:0.1px">2</span></div>
<div class="t" style="left:379px;top:393px;font-size:11px;line-height:12px;font-weight:normal;color:#000;letter-spacing:0.3px">Test St</div>
<div class="t" style="left:536px;top:393px;font-size:11px;line-height:12px;font-weight:normal;color:#000;letter-spacing:0.3px"><span style="display:inline-block;transform:scaleX(0.92);transform-origin:0 0">BENTLEIGH</span></div>
<div class="t" style="left:730px;top:393px;font-size:11px;line-height:12px;font-weight:normal;color:#000;letter-spacing:0.3px">VIC</div>
<div class="t" style="left:791px;top:393px;font-size:11px;line-height:12px;font-weight:normal;color:#000;letter-spacing:0.3px"><span style="font-size:12px;letter-spacing:0.1px">3204</span></div>
<div class="t" style="left:866px;top:393px;font-size:11px;line-height:12px;font-weight:normal;color:#000;letter-spacing:0.3px"><span style="font-size:12px;letter-spacing:0.1px">7</span><span style="font-size:12px;margin:0 0.9px">/</span><span style="font-size:12px;letter-spacing:0.1px">07</span><span style="font-size:12px;margin:0 0.9px">/</span><span style="font-size:12px;letter-spacing:0.1px">2021</span></div>
<div class="t" style="left:948px;top:393px;font-size:11px;line-height:12px;font-weight:normal;color:#000;letter-spacing:0.3px"><span style="font-size:12px;letter-spacing:0.1px">1</span><span style="font-size:12px;margin:0 0.9px">/</span><span style="font-size:12px;letter-spacing:0.1px">09</span><span style="font-size:12px;margin:0 0.9px">/</span><span style="font-size:12px;letter-spacing:0.1px">2021</span></div>
<div class="t" style="left:1030px;width:76px;overflow:hidden;top:393px;font-size:11px;line-height:12px;font-weight:normal;color:#000;letter-spacing:0.75px">Australia Post</div>
<div class="t" style="left:105px;width:51px;text-align:right;top:410px;font-size:11px;line-height:12px;font-weight:normal;color:#000;letter-spacing:0.3px"><span style="font-size:12px;letter-spacing:0.1px">22478</span></div>
<div class="t" style="left:229px;top:410px;font-size:11px;line-height:12px;font-weight:normal;color:#000;letter-spacing:0.3px">Test Co.</div>
<div class="t" style="left:304px;top:410px;font-size:11px;line-height:12px;font-weight:normal;color:#000;letter-spacing:0.3px">Test<span style="font-size:12px;letter-spacing:0.1px">3</span></div>
<div class="t" style="left:379px;top:410px;font-size:11px;line-height:12px;font-weight:normal;color:#000;letter-spacing:0.3px">Test Ave</div>
<div class="t" style="left:536px;top:410px;font-size:11px;line-height:12px;font-weight:normal;color:#000;letter-spacing:0.3px"><span style="display:inline-block;transform:scaleX(0.92);transform-origin:0 0">BENTLEIGH</span></div>
<div class="t" style="left:730px;top:410px;font-size:11px;line-height:12px;font-weight:normal;color:#000;letter-spacing:0.3px">VIC</div>
<div class="t" style="left:791px;top:410px;font-size:11px;line-height:12px;font-weight:normal;color:#000;letter-spacing:0.3px"><span style="font-size:12px;letter-spacing:0.1px">3204</span></div>
<div class="t" style="left:866px;top:410px;font-size:11px;line-height:12px;font-weight:normal;color:#000;letter-spacing:0.3px"><span style="font-size:12px;letter-spacing:0.1px">7</span><span style="font-size:12px;margin:0 0.9px">/</span><span style="font-size:12px;letter-spacing:0.1px">07</span><span style="font-size:12px;margin:0 0.9px">/</span><span style="font-size:12px;letter-spacing:0.1px">2021</span></div>
<div class="t" style="left:948px;top:410px;font-size:11px;line-height:12px;font-weight:normal;color:#000;letter-spacing:0.3px"><span style="font-size:12px;letter-spacing:0.1px">1</span><span style="font-size:12px;margin:0 0.9px">/</span><span style="font-size:12px;letter-spacing:0.1px">09</span><span style="font-size:12px;margin:0 0.9px">/</span><span style="font-size:12px;letter-spacing:0.1px">2021</span></div>
<div class="t" style="left:1030px;width:76px;overflow:hidden;top:410px;font-size:11px;line-height:12px;font-weight:normal;color:#000;letter-spacing:0.75px">Australia Post</div>
<div class="t" style="left:105px;width:51px;text-align:right;top:427px;font-size:11px;line-height:12px;font-weight:normal;color:#000;letter-spacing:0.3px"><span style="font-size:12px;letter-spacing:0.1px">22479</span></div>
<div class="t" style="left:229px;top:427px;font-size:11px;line-height:12px;font-weight:normal;color:#000;letter-spacing:0.3px">Test Co.</div>
<div class="t" style="left:304px;top:427px;font-size:11px;line-height:12px;font-weight:normal;color:#000;letter-spacing:0.3px">Test<span style="font-size:12px;letter-spacing:0.1px">4</span></div>
<div class="t" style="left:379px;top:427px;font-size:11px;line-height:12px;font-weight:normal;color:#000;letter-spacing:0.3px">Test Gr</div>
<div class="t" style="left:536px;top:427px;font-size:11px;line-height:12px;font-weight:normal;color:#000;letter-spacing:0.3px"><span style="display:inline-block;transform:scaleX(0.94);transform-origin:0 0">CHADSTONE</span></div>
<div class="t" style="left:730px;top:427px;font-size:11px;line-height:12px;font-weight:normal;color:#000;letter-spacing:0.3px">VIC</div>
<div class="t" style="left:791px;top:427px;font-size:11px;line-height:12px;font-weight:normal;color:#000;letter-spacing:0.3px"><span style="font-size:12px;letter-spacing:0.1px">3148</span></div>
<div class="t" style="left:866px;top:427px;font-size:11px;line-height:12px;font-weight:normal;color:#000;letter-spacing:0.3px"><span style="font-size:12px;letter-spacing:0.1px">7</span><span style="font-size:12px;margin:0 0.9px">/</span><span style="font-size:12px;letter-spacing:0.1px">07</span><span style="font-size:12px;margin:0 0.9px">/</span><span style="font-size:12px;letter-spacing:0.1px">2021</span></div>
<div class="t" style="left:948px;top:427px;font-size:11px;line-height:12px;font-weight:normal;color:#000;letter-spacing:0.3px"><span style="font-size:12px;letter-spacing:0.1px">1</span><span style="font-size:12px;margin:0 0.9px">/</span><span style="font-size:12px;letter-spacing:0.1px">09</span><span style="font-size:12px;margin:0 0.9px">/</span><span style="font-size:12px;letter-spacing:0.1px">2021</span></div>
<div class="t" style="left:1030px;width:76px;overflow:hidden;top:427px;font-size:11px;line-height:12px;font-weight:normal;color:#000;letter-spacing:0.75px">Australia Post</div>
<div class="t" style="left:105px;width:51px;text-align:right;top:444px;font-size:11px;line-height:12px;font-weight:normal;color:#000;letter-spacing:0.3px"><span style="font-size:12px;letter-spacing:0.1px">23619</span></div>
<div class="t" style="left:229px;top:444px;font-size:11px;line-height:12px;font-weight:normal;color:#000;letter-spacing:0.3px">Test Co.</div>
<div class="t" style="left:304px;top:444px;font-size:11px;line-height:12px;font-weight:normal;color:#000;letter-spacing:0.3px">Test</div>
<div class="t" style="left:379px;top:444px;font-size:11px;line-height:12px;font-weight:normal;color:#000;letter-spacing:0.3px"><span style="font-size:12px;letter-spacing:0.1px">596</span> Test Rd</div>
<div class="t" style="left:536px;top:444px;font-size:11px;line-height:12px;font-weight:normal;color:#000;letter-spacing:0.3px">ORMOND</div>
<div class="t" style="left:730px;top:444px;font-size:11px;line-height:12px;font-weight:normal;color:#000;letter-spacing:0.3px">VIC</div>
<div class="t" style="left:791px;top:444px;font-size:11px;line-height:12px;font-weight:normal;color:#000;letter-spacing:0.3px"><span style="font-size:12px;letter-spacing:0.1px">3204</span></div>
<div class="t" style="left:866px;top:444px;font-size:11px;line-height:12px;font-weight:normal;color:#000;letter-spacing:0.3px"><span style="font-size:12px;letter-spacing:0.1px">1</span><span style="font-size:12px;margin:0 0.9px">/</span><span style="font-size:12px;letter-spacing:0.1px">09</span><span style="font-size:12px;margin:0 0.9px">/</span><span style="font-size:12px;letter-spacing:0.1px">2021</span></div>
<div class="t" style="left:948px;top:444px;font-size:11px;line-height:12px;font-weight:normal;color:#000;letter-spacing:0.3px"><span style="font-size:12px;letter-spacing:0.1px">1</span><span style="font-size:12px;margin:0 0.9px">/</span><span style="font-size:12px;letter-spacing:0.1px">09</span><span style="font-size:12px;margin:0 0.9px">/</span><span style="font-size:12px;letter-spacing:0.1px">2021</span></div>
<div class="t" style="left:1030px;width:76px;overflow:hidden;top:444px;font-size:11px;line-height:12px;font-weight:normal;color:#000;letter-spacing:0.75px">Australia Post</div>
<div class="t" style="left:105px;width:51px;text-align:right;top:461px;font-size:11px;line-height:12px;font-weight:normal;color:#000;letter-spacing:0.3px"><span style="font-size:12px;letter-spacing:0.1px">23620</span></div>
<div class="t" style="left:229px;top:461px;font-size:11px;line-height:12px;font-weight:normal;color:#000;letter-spacing:0.3px">Test Co.</div>
<div class="t" style="left:304px;top:461px;font-size:11px;line-height:12px;font-weight:normal;color:#000;letter-spacing:0.3px">Test<span style="font-size:12px;letter-spacing:0.1px">2</span></div>
<div class="t" style="left:379px;top:461px;font-size:11px;line-height:12px;font-weight:normal;color:#000;letter-spacing:0.3px">Test St</div>
<div class="t" style="left:536px;top:461px;font-size:11px;line-height:12px;font-weight:normal;color:#000;letter-spacing:0.3px"><span style="display:inline-block;transform:scaleX(0.92);transform-origin:0 0">BENTLEIGH</span></div>
<div class="t" style="left:730px;top:461px;font-size:11px;line-height:12px;font-weight:normal;color:#000;letter-spacing:0.3px">VIC</div>
<div class="t" style="left:791px;top:461px;font-size:11px;line-height:12px;font-weight:normal;color:#000;letter-spacing:0.3px"><span style="font-size:12px;letter-spacing:0.1px">3204</span></div>
<div class="t" style="left:866px;top:461px;font-size:11px;line-height:12px;font-weight:normal;color:#000;letter-spacing:0.3px"><span style="font-size:12px;letter-spacing:0.1px">1</span><span style="font-size:12px;margin:0 0.9px">/</span><span style="font-size:12px;letter-spacing:0.1px">09</span><span style="font-size:12px;margin:0 0.9px">/</span><span style="font-size:12px;letter-spacing:0.1px">2021</span></div>
<div class="t" style="left:948px;top:461px;font-size:11px;line-height:12px;font-weight:normal;color:#000;letter-spacing:0.3px"><span style="font-size:12px;letter-spacing:0.1px">1</span><span style="font-size:12px;margin:0 0.9px">/</span><span style="font-size:12px;letter-spacing:0.1px">09</span><span style="font-size:12px;margin:0 0.9px">/</span><span style="font-size:12px;letter-spacing:0.1px">2021</span></div>
<div class="t" style="left:1030px;width:76px;overflow:hidden;top:461px;font-size:11px;line-height:12px;font-weight:normal;color:#000;letter-spacing:0.75px">Australia Post</div>
<div class="a" style="left:103px;top:287px;width:57px;height:19px;border:2px solid #217346"></div>
<div class="a" style="left:156px;top:302px;width:6px;height:6px;background:#217346;border:1px solid #fff"></div>
<div class="a" style="left:1107px;top:271px;width:21px;height:276px;background:#e6e6e6"></div>
<div class="a" style="left:1110px;top:273px;width:15px;height:287px;background:#fff;border:1px solid #ababab"></div>
<div class="a" style="left:1111px;top:287px;width:13px;height:1px;background:#c8c8c8"></div>
<svg class="a" style="left:1113px;top:277px" width="9" height="6" viewBox="0 0 9 6"><path d="M0 5.5 L4.5 1 L9 5.5 Z" fill="#555"/></svg>

</div></body></html>
